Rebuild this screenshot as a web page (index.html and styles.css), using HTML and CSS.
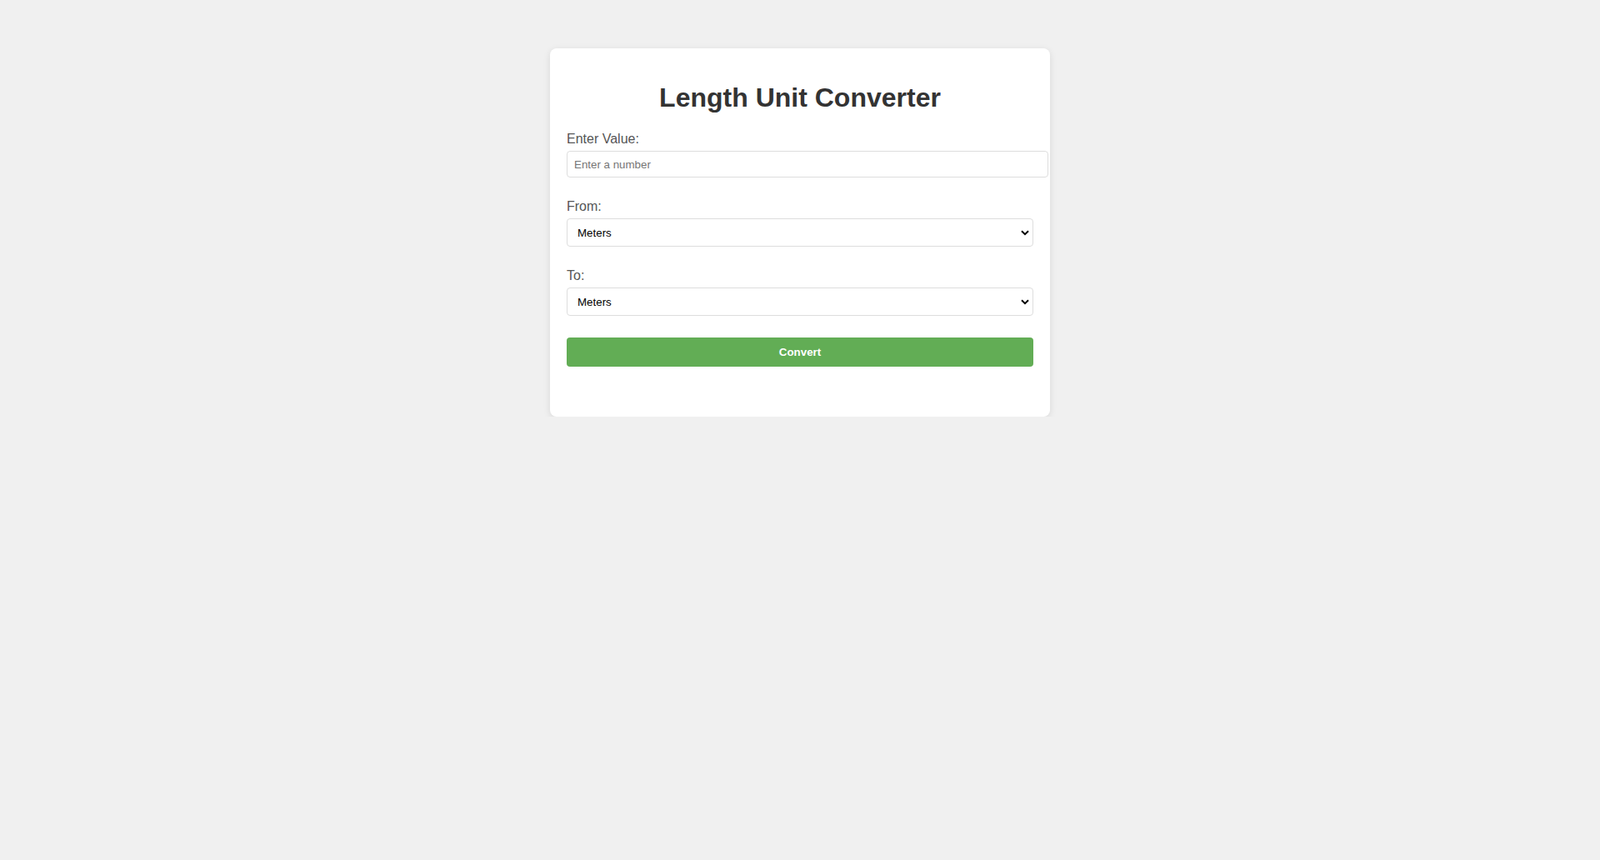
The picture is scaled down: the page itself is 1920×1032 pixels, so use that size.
FILE: index.html
```html
<!DOCTYPE html>
<html lang="en">
<head>
<meta charset="utf-8">
<title>Length Unit Converter</title>
<link rel="stylesheet" href="styles.css">
</head>
<body>
<div class="card">
  <h1 class="title">Length Unit Converter</h1>
  <div class="field">
    <label class="label" for="value">Enter Value:</label>
    <input class="input" id="value" type="number" placeholder="Enter a number">
  </div>
  <div class="field">
    <label class="label" for="from">From:</label>
    <div class="select-wrap">
      <select class="select" id="from">
        <option>Meters</option>
        <option>Kilometers</option>
        <option>Centimeters</option>
        <option>Millimeters</option>
        <option>Miles</option>
        <option>Yards</option>
        <option>Feet</option>
        <option>Inches</option>
      </select>
      <svg class="chevron" width="10" height="7" viewBox="0 0 10 7"><path d="M1 1.2 L5 5.2 L9 1.2" fill="none" stroke="#000" stroke-width="2"/></svg>
    </div>
  </div>
  <div class="field">
    <label class="label" for="to">To:</label>
    <div class="select-wrap">
      <select class="select" id="to">
        <option>Meters</option>
        <option>Kilometers</option>
        <option>Centimeters</option>
        <option>Millimeters</option>
        <option>Miles</option>
        <option>Yards</option>
        <option>Feet</option>
        <option>Inches</option>
      </select>
      <svg class="chevron" width="10" height="7" viewBox="0 0 10 7"><path d="M1 1.2 L5 5.2 L9 1.2" fill="none" stroke="#000" stroke-width="2"/></svg>
    </div>
  </div>
  <button class="button" type="button">Convert</button>
  <div class="result"></div>
</div>
</body>
</html>
```

FILE: styles.css
```css
html, body {
  background: #f0f0f0;
}
body {
  margin: 8px;
  font-family: "Liberation Sans", Arial, sans-serif;
}
.card {
  width: 560px;
  margin: 50px auto 0;
  padding: 20px;
  background: #fff;
  border-radius: 8px;
  box-shadow: 0 2px 8px rgba(0, 0, 0, 0.1);
}
.title {
  margin: 21px 0 22px;
  font-size: 32px;
  font-weight: bold;
  text-align: center;
  color: #333;
}
.field {
  margin-bottom: 26px;
}
.label {
  display: block;
  margin-bottom: 5px;
  font-size: 16px;
  color: #555;
}
.input {
  display: block;
  width: 100%;
  height: 14px;
  margin: 0;
  padding: 8px;
  border: 1px solid #ddd;
  border-radius: 4px;
  font-family: "Liberation Sans", Arial, sans-serif;
  font-size: 13.33px;
  color: #000;
  background: #fff;
  outline: none;
}
.input::placeholder {
  color: #757575;
}
.select-wrap {
  position: relative;
}
.select {
  display: block;
  width: 560px;
  height: 34px;
  margin: 0;
  padding: 0 8px 0 12px;
  border: 1px solid #ddd;
  border-radius: 4px;
  background: #fff;
  font-family: "Liberation Sans", Arial, sans-serif;
  font-size: 13.33px;
  color: #000;
  -webkit-appearance: none;
  appearance: none;
  outline: none;
}
.chevron {
  position: absolute;
  right: 5px;
  top: 14px;
  pointer-events: none;
}
.button {
  display: block;
  width: 560px;
  height: 35px;
  margin: 0;
  padding: 0;
  border: none;
  border-radius: 4px;
  background: #62ad55;
  color: #fff;
  font-family: "Liberation Sans", Arial, sans-serif;
  font-size: 13.33px;
  font-weight: bold;
  cursor: pointer;
}
.result {
  height: 20px;
  margin-top: 20px;
}
```
